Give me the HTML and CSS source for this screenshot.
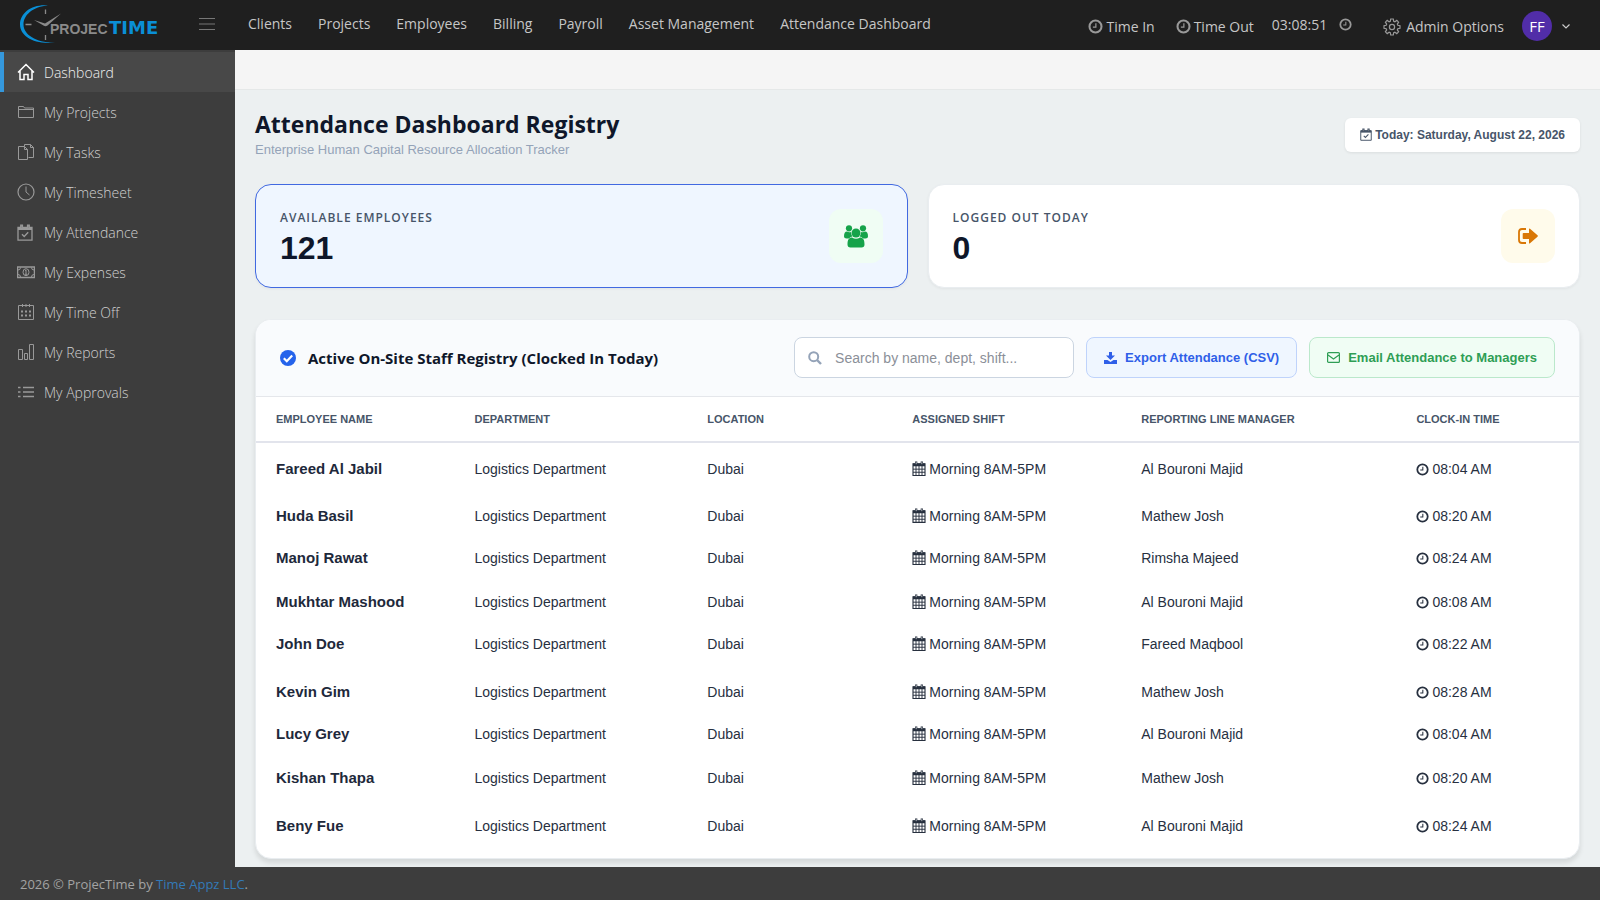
FILE: index.html
```html
<!DOCTYPE html>
<html lang="en">
  <head>
    <meta charset="UTF-8" />
    <meta name="viewport" content="width=device-width, initial-scale=1.0" />
    <title>Attendance Dashboard Registry</title>
    <link rel="stylesheet" href="styles.css">
  </head>
  <body>
    <!-- shared icons -->
    <svg class="sprite" aria-hidden="true">
      <symbol id="clock" viewBox="0 0 16 16">
        <circle cx="8" cy="8" r="6.4" fill="none" stroke="currentColor" stroke-width="2.2" />
        <path d="M8.4 4.5v4.2H5.2" fill="none" stroke="currentColor" stroke-width="1.3" />
      </symbol>
      <symbol id="calendar" viewBox="0 0 14 16">
        <path d="M0.6 3h12.8v12.4H0.6z" fill="none" stroke="currentColor" stroke-width="1.2" />
        <path d="M0.6 2.6h12.8v3H0.6z" fill="currentColor" />
        <path d="M4 0.4v3.4M10 0.4v3.4" stroke="currentColor" stroke-width="2.4" />
        <path d="M4 1.2v2.2M10 1.2v2.2" stroke="#fff" stroke-width="0.7" />
        <path d="M3.8 5v10.4M7 5v10.4M10.2 5v10.4M0.6 8.7h12.8M0.6 12h12.8" stroke="currentColor" stroke-width="1" />
      </symbol>
      <symbol id="calendar-check" viewBox="0 0 16 17">
        <path d="M1 3.4h14v12.8H1z" fill="none" stroke="currentColor" stroke-width="1.3" />
        <path d="M1 3h14v3H1z" fill="currentColor" />
        <path d="M4.6 0.5v4M11.4 0.5v4" stroke="currentColor" stroke-width="3" />
        <path d="M4.6 1.6v2.4M11.4 1.6v2.4" stroke="#8a8a8a" stroke-width="0.8" />
        <path d="M5 10.2l2.2 2.2 4-4.2" fill="none" stroke="currentColor" stroke-width="1.4" />
      </symbol>
    </svg>

    <header class="topbar">
      <a href="#" class="logo" aria-label="ProjecTime">
        <svg width="140" height="40" viewBox="0 0 140 40">
          <path d="M28 0.500C12-1 0 8 0 19.500C0 31 14 40 35 37.500C17 38 3.500 30 3.500 19.500C3.500 10 13 1.500 28 0.500z" fill="#0a8fd6" />
          <path d="M25.500 4.500v4.500M5.500 19.500h6M25.500 30v5" stroke="#8a8a8a" stroke-width="1.300" />
          <path d="M14 15l11 3.500L41 8.500L27.500 20.500q-2 1.500-4 0z" fill="#8a8a8a" />
          <text x="30" y="29" class="logo-projec">PROJEC</text>
          <text x="89" y="29" class="logo-time">TIME</text>
        </svg>
      </a>
      <button class="menu-toggle" aria-label="Toggle menu">
        <svg width="16" height="12" viewBox="0 0 16 12"><path d="M0 0.500h16M0 6h16M0 11.500h16" stroke="#777" stroke-width="1" /></svg>
      </button>
      <nav class="topnav">
        <a href="#">Clients</a>
        <a href="#">Projects</a>
        <a href="#">Employees</a>
        <a href="#">Billing</a>
        <a href="#">Payroll</a>
        <a href="#">Asset Management</a>
        <a href="#">Attendance Dashboard</a>
      </nav>
      <div class="tools">
        <a href="#" class="tool"><svg width="15" height="15"><use href="#clock" /></svg>Time In</a>
        <a href="#" class="tool tool-out"><svg width="15" height="15"><use href="#clock" /></svg>Time Out</a>
        <span class="timer">03:08:51<svg width="13" height="13"><use href="#clock" /></svg></span>
        <a href="#" class="tool tool-admin">
          <svg width="18" height="18" viewBox="0 0 18 18" fill="none" stroke="currentColor" stroke-width="1.200">
            <path d="M7.700 1h2.600l.4 2.200 1.200.5 1.900-1.300 1.800 1.800-1.300 1.900.5 1.200 2.200.4v2.600l-2.200.4-.5 1.200 1.300 1.900-1.800 1.800-1.900-1.300-1.200.5-.4 2.200H7.700l-.4-2.200-1.200-.5-1.900 1.300-1.800-1.800 1.300-1.900-.5-1.200L1 10.300V7.700l2.200-.4.500-1.200-1.300-1.900 1.800-1.800 1.900 1.300 1.200-.5z" />
            <circle cx="9" cy="9" r="2.600" />
          </svg>Admin Options</a>
        <button class="user" aria-label="User menu">
          <span class="avatar">FF</span>
          <svg width="8" height="5" viewBox="0 0 8 5"><path d="M0.500 0.500L4 4l3.500-3.500" fill="none" stroke="#ccc" stroke-width="1.200" /></svg>
        </button>
      </div>
    </header>

    <div class="layout">
      <nav class="sidebar">
        <a href="#" class="active">
          <svg width="18" height="18" viewBox="0 0 18 18" fill="none" stroke="currentColor" stroke-width="1.500"><path d="M1 9.500L9 1.500l8 8M3 8v8.500h4v-5h4v5h4V8" /></svg>Dashboard</a>
        <a href="#">
          <svg width="18" height="18" viewBox="0 0 18 18" fill="none" stroke="currentColor"><path d="M1.500 3.500h5l1 1.500h9v9.500h-15zM1.500 6.500h15" /></svg>My Projects</a>
        <a href="#">
          <svg width="18" height="18" viewBox="0 0 18 18" fill="none" stroke="currentColor"><path d="M1.500 3.500h6l3 3v10h-9zM7.500 3.500v3h3M7.500 3V1.500h6l3 3v10h-5M13.500 1.500v3h3" /></svg>My Tasks</a>
        <a href="#">
          <svg width="18" height="18" viewBox="0 0 18 18" fill="none" stroke="currentColor"><circle cx="9" cy="9" r="8" stroke-width="1.200" /><path d="M9 3.500v5.500l3.500 3" /></svg>My Timesheet</a>
        <a href="#">
          <svg width="18" height="17" viewBox="1 0 18 17"><use href="#calendar-check" width="16" height="17" x="1" /></svg>My Attendance</a>
        <a href="#">
          <svg width="18" height="18" viewBox="0 0 18 18" fill="none" stroke="currentColor"><path d="M0.600 4h16.800v10.500H0.600z" stroke-width="1.300" /><path d="M1 7q2.500 0 2.500-2.500M17 7q-2.500 0-2.500-2.500M1 11.500q2.500 0 2.500 2.500M17 11.500q-2.500 0-2.500 2.500" /><ellipse cx="9" cy="9.200" rx="3" ry="3.500" /><path d="M8 7.700l1-.7v4.300M7.700 11.300h2.600" /></svg>My Expenses</a>
        <a href="#">
          <svg width="18" height="18" viewBox="0 0 18 18" fill="none" stroke="currentColor"><path d="M1.500 2.500h15v14h-15z" /><path d="M5.500 1v3M9 1v3M12.500 1v3" /><path d="M4 8.500h10M4 12.500h10" stroke-width="1.800" stroke-dasharray="2 2" /></svg>My Time Off</a>
        <a href="#">
          <svg width="18" height="18" viewBox="0 0 18 18" fill="none" stroke="currentColor"><path d="M1.500 6.500h4v10h-4zM7.500 10.500h3v6h-3zM12.500 1.500h4v15h-4z" /></svg>My Reports</a>
        <a href="#">
          <svg width="18" height="18" viewBox="0 0 18 18" fill="none" stroke="currentColor" stroke-width="1.300"><path d="M1 4.500h2.500M1 9h2.500M1 13.500h2.500M6 4.500h11M6 9h11M6 13.500h11" /></svg>My Approvals</a>
      </nav>

      <main class="content">
        <div class="crumbs"></div>
        <div class="page">
          <div class="page-head">
            <div>
              <h1>Attendance Dashboard Registry</h1>
              <p class="subtitle">Enterprise Human Capital Resource Allocation Tracker</p>
            </div>
            <div class="today"><svg width="12" height="13"><use href="#calendar-check" /></svg>Today: Saturday, August 22, 2026</div>
          </div>

          <div class="stats">
            <div class="stat selected">
              <div class="stat-text">
                <div class="stat-label">AVAILABLE EMPLOYEES</div>
                <div class="stat-value">121</div>
              </div>
              <div class="stat-icon green">
                <svg width="24" height="23" viewBox="0 0 24 23" fill="currentColor">
                  <circle cx="5" cy="3.300" r="3.100" /><circle cx="19" cy="3.300" r="3.100" />
                  <path d="M0 11.500C0 8 1 6.500 3 6.500c1 .8 2.500 1 4 .6C7 9 7.500 10.500 8.500 11.500Q6.500 11.500 5 13.500H2.500Q0 13.500 0 11.500z" />
                  <path d="M24 11.500C24 8 23 6.500 21 6.500c-1 .8-2.500 1-4 .6C17 9 16.500 10.500 15.500 11.500Q17.500 11.500 19 13.500h2.500Q24 13.500 24 11.500z" />
                  <circle cx="12" cy="8" r="4.500" />
                  <path d="M3.500 19.500C3.500 14.500 5 12.500 8 12.500q4 2.700 8 0c3 0 4.500 2 4.500 7q0 3-3 3h-11q-3 0-3-3z" />
                </svg>
              </div>
            </div>
            <div class="stat">
              <div class="stat-text">
                <div class="stat-label">LOGGED OUT TODAY</div>
                <div class="stat-value">0</div>
              </div>
              <div class="stat-icon amber">
                <svg width="20" height="16" viewBox="0 0 20 16" fill="currentColor">
                  <path d="M8 1H4Q1 1 1 4v8q0 3 3 3h4" fill="none" stroke="currentColor" stroke-width="1.800" />
                  <path d="M5.500 5h5.500V1q0-1 1-.3l7.500 6.600q.7.700 0 1.400L12 15.300q-1 .7-1-.3v-4H5.500q-.8 0-.8-.8V5.800q0-.8.8-.8z" />
                </svg>
              </div>
            </div>
          </div>

          <section class="registry">
            <div class="registry-head">
              <h2>
                <svg width="16" height="16" viewBox="0 0 16 16"><circle cx="8" cy="8" r="8" fill="#2563eb" /><path d="M3.800 8.200l3 3 5.400-5.600" fill="none" stroke="#fff" stroke-width="2.200" /></svg>
                Active On-Site Staff Registry (Clocked In Today)
              </h2>
              <div class="actions">
                <label class="search">
                  <svg width="14" height="14" viewBox="0 0 14 14" fill="none" stroke="#94a3b8" stroke-width="2"><circle cx="5.700" cy="5.700" r="4.500" /><path d="M9 9l4 4" stroke-width="2.400" /></svg>
                  <input type="text" placeholder="Search by name, dept, shift..." aria-label="Search staff">
                </label>
                <button class="btn btn-blue">
                  <svg width="13" height="12" viewBox="0 0 13 12" fill="currentColor"><path d="M5 0h3v3.500h3L6.500 8 2 3.500h3zM0 8h3.500l3 2 3-2H13v4H0z" /></svg>
                  Export Attendance (CSV)
                </button>
                <button class="btn btn-green">
                  <svg width="13" height="11" viewBox="0 0 13 11" fill="none" stroke="currentColor" stroke-width="1.200"><rect x="0.600" y="0.600" width="11.800" height="9.800" rx="1" /><path d="M1 3l5.500 4L12 3" /></svg>
                  Email Attendance to Managers
                </button>
              </div>
            </div>

            <table>
              <thead>
                <tr>
                  <th class="col-name">EMPLOYEE NAME</th>
                  <th class="col-dept">DEPARTMENT</th>
                  <th class="col-loc">LOCATION</th>
                  <th class="col-shift">ASSIGNED SHIFT</th>
                  <th class="col-manager">REPORTING LINE MANAGER</th>
                  <th class="col-time">CLOCK-IN TIME</th>
                </tr>
              </thead>
              <tbody>
                <tr class="tall">
                  <td>Fareed Al Jabil</td><td>Logistics Department</td><td>Dubai</td>
                  <td><svg width="14" height="15"><use href="#calendar" /></svg>Morning 8AM-5PM</td>
                  <td>Al Bouroni Majid</td>
                  <td><svg width="13" height="13"><use href="#clock" /></svg>08:04 AM</td>
                </tr>
                <tr>
                  <td>Huda Basil</td><td>Logistics Department</td><td>Dubai</td>
                  <td><svg width="14" height="15"><use href="#calendar" /></svg>Morning 8AM-5PM</td>
                  <td>Mathew Josh</td>
                  <td><svg width="13" height="13"><use href="#clock" /></svg>08:20 AM</td>
                </tr>
                <tr class="mid">
                  <td>Manoj Rawat</td><td>Logistics Department</td><td>Dubai</td>
                  <td><svg width="14" height="15"><use href="#calendar" /></svg>Morning 8AM-5PM</td>
                  <td>Rimsha Majeed</td>
                  <td><svg width="13" height="13"><use href="#clock" /></svg>08:24 AM</td>
                </tr>
                <tr>
                  <td>Mukhtar Mashood</td><td>Logistics Department</td><td>Dubai</td>
                  <td><svg width="14" height="15"><use href="#calendar" /></svg>Morning 8AM-5PM</td>
                  <td>Al Bouroni Majid</td>
                  <td><svg width="13" height="13"><use href="#clock" /></svg>08:08 AM</td>
                </tr>
                <tr class="tall">
                  <td>John Doe</td><td>Logistics Department</td><td>Dubai</td>
                  <td><svg width="14" height="15"><use href="#calendar" /></svg>Morning 8AM-5PM</td>
                  <td>Fareed Maqbool</td>
                  <td><svg width="13" height="13"><use href="#clock" /></svg>08:22 AM</td>
                </tr>
                <tr>
                  <td>Kevin Gim</td><td>Logistics Department</td><td>Dubai</td>
                  <td><svg width="14" height="15"><use href="#calendar" /></svg>Morning 8AM-5PM</td>
                  <td>Mathew Josh</td>
                  <td><svg width="13" height="13"><use href="#clock" /></svg>08:28 AM</td>
                </tr>
                <tr class="mid">
                  <td>Lucy Grey</td><td>Logistics Department</td><td>Dubai</td>
                  <td><svg width="14" height="15"><use href="#calendar" /></svg>Morning 8AM-5PM</td>
                  <td>Al Bouroni Majid</td>
                  <td><svg width="13" height="13"><use href="#clock" /></svg>08:04 AM</td>
                </tr>
                <tr class="tall">
                  <td>Kishan Thapa</td><td>Logistics Department</td><td>Dubai</td>
                  <td><svg width="14" height="15"><use href="#calendar" /></svg>Morning 8AM-5PM</td>
                  <td>Mathew Josh</td>
                  <td><svg width="13" height="13"><use href="#clock" /></svg>08:20 AM</td>
                </tr>
                <tr class="tall">
                  <td>Beny Fue</td><td>Logistics Department</td><td>Dubai</td>
                  <td><svg width="14" height="15"><use href="#calendar" /></svg>Morning 8AM-5PM</td>
                  <td>Al Bouroni Majid</td>
                  <td><svg width="13" height="13"><use href="#clock" /></svg>08:24 AM</td>
                </tr>
              </tbody>
            </table>
          </section>
        </div>
      </main>
    </div>

    <footer class="footer">2026 © ProjecTime by <a href="#">Time Appz LLC</a>.</footer>
  </body>
</html>
```
FILE: styles.css
```css
* {
  box-sizing: border-box;
}
body {
  margin: 0;
  min-height: 100vh;
  display: flex;
  flex-direction: column;
  font-family: 'Open Sans', sans-serif;
  font-size: 14px;
  background: #3d3d3d;
  color: #1e293b;
}
a {
  text-decoration: none;
}
button {
  font-family: inherit;
  border: none;
  background: none;
  padding: 0;
  cursor: pointer;
}
svg {
  flex-shrink: 0;
}
.sprite {
  position: absolute;
  width: 0;
  height: 0;
}

/* Top bar */
.topbar {
  display: flex;
  align-items: center;
  height: 50px;
  padding: 0 30px 0 20px;
  background: #1f1f1f;
  color: #c6c6c6;
}
.logo svg {
  display: block;
}
.logo-projec {
  font: bold 14px 'Liberation Sans', sans-serif;
  fill: #8a8a8a;
}
.logo-time {
  font: bold 18px 'DejaVu Sans', sans-serif;
  fill: #0a8fd6;
}
.menu-toggle {
  display: flex;
  margin: 0 33px 2px 39px;
}
.topnav {
  display: flex;
  gap: 26px;
  padding-bottom: 4px;
}
.topnav a,
.tool {
  color: #c6c6c6;
}
.tools {
  display: flex;
  align-items: center;
  margin-left: auto;
}
.tool {
  display: flex;
  align-items: center;
  gap: 3px;
  padding-top: 3px;
}
.tool svg,
.timer svg {
  color: #999;
}
.tool-out {
  margin-left: 21px;
}
.tool-admin {
  margin-left: 31px;
  gap: 5px;
}
.timer {
  display: flex;
  align-items: center;
  gap: 12px;
  margin-left: 18px;
  padding-bottom: 2px;
}
.user {
  display: flex;
  align-items: center;
  gap: 10px;
  margin-left: 18px;
  padding-top: 2px;
}
.avatar {
  width: 30px;
  height: 30px;
  border-radius: 50%;
  background: #512da8;
  color: #fff;
  font-size: 15px;
  line-height: 30px;
}

/* Sidebar */
.layout {
  display: flex;
  flex: 1;
}
.sidebar {
  width: 235px;
  flex-shrink: 0;
  padding-top: 2px;
}
.sidebar a {
  display: flex;
  align-items: center;
  gap: 9px;
  height: 40px;
  padding-left: 17px;
  color: #d0d0d0;
  font-weight: 300;
}
.sidebar svg {
  color: #999;
}
.sidebar .active {
  border-left: 4px solid #3598dc;
  padding-left: 13px;
  background: #484848;
  color: #f1f1f1;
}
.sidebar .active svg {
  color: #fff;
}

/* Content */
.content {
  flex: 1;
  background: #ecf0f1;
}
.crumbs {
  height: 40px;
  background: #f5f5f5;
  border-bottom: 1px solid #e5e8e8;
}
.page {
  padding: 18px 20px 8px;
}
.page-head {
  display: flex;
  justify-content: space-between;
  align-items: center;
  margin-bottom: 26px;
}
h1 {
  margin: 0;
  font-size: 23px;
  line-height: 33px;
  color: #0f172a;
}
.subtitle {
  margin: 0;
  font-family: 'Liberation Sans', sans-serif;
  font-size: 13px;
  line-height: 17px;
  color: #94a3b8;
}
.today {
  display: flex;
  align-items: center;
  gap: 3px;
  height: 34px;
  margin-top: 3px;
  padding: 0 15px;
  border-radius: 6px;
  background: #fff;
  box-shadow: 0 1px 3px rgba(0, 0, 0, 0.08);
  font-family: 'Liberation Sans', sans-serif;
  font-size: 12px;
  font-weight: bold;
  color: #475569;
}
.stats {
  display: grid;
  grid-template-columns: 1fr 1fr;
  gap: 20px;
  margin-bottom: 31px;
}
.stat {
  display: flex;
  justify-content: space-between;
  align-items: center;
  height: 104px;
  padding: 0 24px;
  border: 1px solid #e9edf0;
  border-radius: 16px;
  background: #fff;
  box-shadow: 0 1px 3px rgba(0, 0, 0, 0.05);
}
.stat.selected {
  border-color: #4169e1;
  background: #eff6ff;
}
.stat-text {
  padding-top: 7px;
}
.stat-label {
  font-size: 12px;
  font-weight: 600;
  line-height: 16px;
  letter-spacing: 1px;
  color: #475569;
}
.stat-value {
  font-family: 'Liberation Sans', sans-serif;
  font-size: 32px;
  font-weight: bold;
  line-height: 44px;
  color: #0f172a;
}
.stat-icon {
  display: flex;
  align-items: center;
  justify-content: center;
  width: 54px;
  height: 54px;
  border-radius: 12px;
}
.stat-icon.green {
  background: #f0fdf4;
  color: #16a34a;
}
.stat-icon.amber {
  background: #fffbeb;
  color: #d97706;
}

/* Registry */
.registry {
  overflow: hidden;
  padding-bottom: 10px;
  border: 1px solid #e9edf0;
  border-radius: 16px;
  background: #fff;
  box-shadow: 0 4px 5px rgba(0, 0, 0, 0.1);
  font-family: 'Liberation Sans', sans-serif;
}
.registry-head {
  display: flex;
  justify-content: space-between;
  align-items: center;
  padding: 17px 24px 18px;
  border-bottom: 1px solid #e5e7eb;
  background: #f9fbfd;
}
h2 {
  display: flex;
  align-items: center;
  gap: 12px;
  margin: 0;
  font-family: 'Open Sans', sans-serif;
  font-size: 15px;
  color: #0f172a;
}
.actions {
  display: flex;
  gap: 12px;
}
.search {
  display: flex;
  align-items: center;
  gap: 13px;
  width: 280px;
  height: 41px;
  padding: 0 13px;
  border: 1px solid #cbd5e1;
  border-radius: 8px;
  background: #fff;
}
.search input {
  flex: 1;
  min-width: 0;
  padding: 0;
  border: none;
  outline: none;
  background: none;
  font-family: inherit;
  font-size: 14px;
}
.search input::placeholder {
  color: #8b8f98;
}
.btn {
  display: flex;
  align-items: center;
  gap: 8px;
  height: 41px;
  padding: 0 17px;
  border: 1px solid;
  border-radius: 8px;
  font-size: 13px;
  font-weight: bold;
}
.btn-blue {
  border-color: #bfd3fb;
  background: #eff6ff;
  color: #2f5fe8;
}
.btn-green {
  border-color: #bbe8cb;
  background: #f0fdf4;
  color: #2f9e55;
}
table {
  width: 100%;
  table-layout: fixed;
  border-collapse: collapse;
}
th {
  height: 45px;
  padding: 0 0 0 20px;
  border-bottom: 2px solid #e2e4ec;
  font-size: 11px;
  text-align: left;
  color: #475569;
}
.col-name {
  width: 15%;
}
.col-dept {
  width: 17.6%;
}
.col-loc {
  width: 15.5%;
}
.col-shift {
  width: 17.3%;
}
.col-manager {
  width: 20.8%;
}
td {
  height: 42px;
  padding: 17px 0 0 20px;
  font-size: 14px;
  line-height: 18px;
  vertical-align: top;
  color: #27303f;
}
td:first-child {
  font-size: 15px;
  font-weight: bold;
  color: #1e293b;
}
td svg {
  margin-right: 3px;
  vertical-align: -2px;
}
.mid td {
  height: 44px;
}
.tall td {
  height: 48px;
}

.footer {
  height: 33px;
  padding-left: 20px;
  font-size: 13px;
  line-height: 34px;
  color: #a3a3a3;
}
.footer a {
  color: #337ab7;
}
```
